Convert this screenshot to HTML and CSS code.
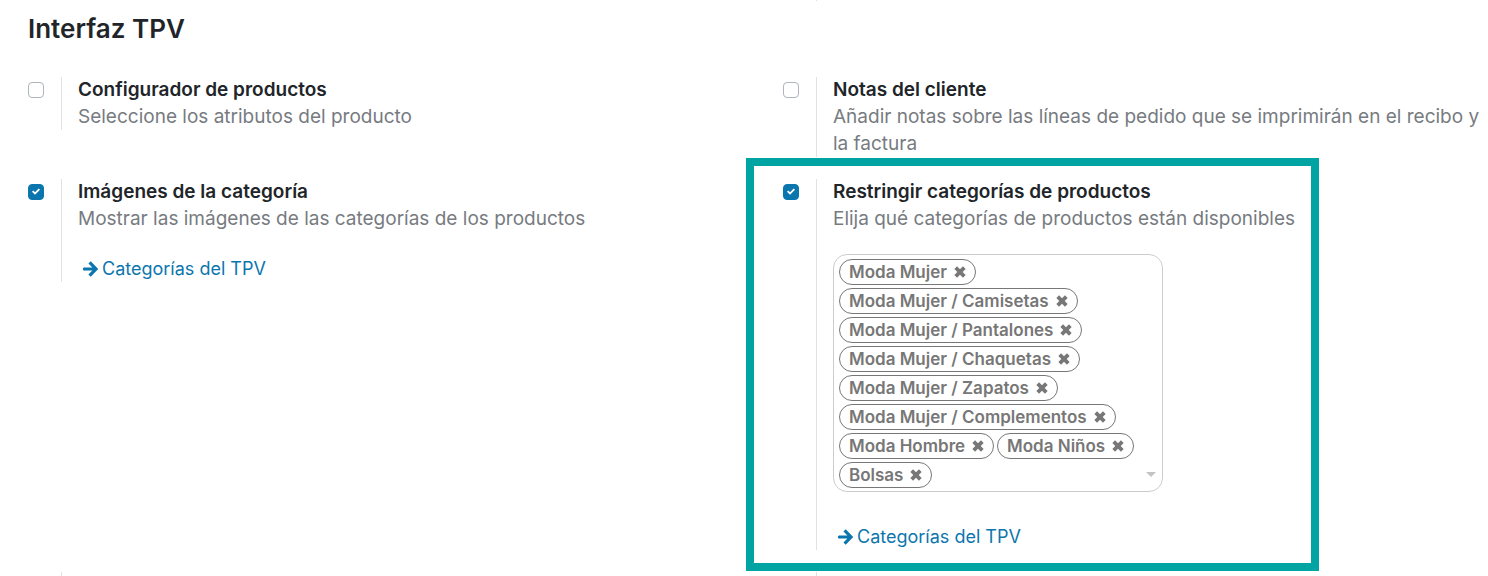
FILE: index.html
```
<!DOCTYPE html>
<html lang="es">
<head>
<meta charset="utf-8">
<title>Interfaz TPV</title>
<meta name="viewport" content="width=device-width, initial-scale=1">
<link rel="stylesheet" href="styles.css">
</head>
<body>
<svg class="sprite" aria-hidden="true">
  <symbol id="arrow" viewBox="0 0 16 16"><path d="M2 8H13M7.6 1.4L14 8L7.6 14.6" fill="none" stroke="currentColor" stroke-width="3.2"/><path d="M2.4 6.4a1.6 1.6 0 0 0 0 3.2" fill="currentColor"/></symbol>
  <symbol id="times" viewBox="0 0 12 12"><path d="M1.7 1.7L10.3 10.3M10.3 1.7L1.7 10.3" fill="none" stroke="currentColor" stroke-width="3.8"/></symbol>
</svg>
<main class="settings">
  <div class="grid grid-previous"><div></div><div class="stub"></div></div>
  <h2 class="section-title">Interfaz TPV</h2>
  <div class="grid">
    <section class="setting">
      <input class="check" type="checkbox" id="configurator">
      <div class="setting-body">
        <label class="name" for="configurator">Configurador de productos</label>
        <p class="help">Seleccione los atributos del producto</p>
      </div>
    </section>
    <section class="setting">
      <input class="check" type="checkbox" id="notes">
      <div class="setting-body">
        <label class="name" for="notes">Notas del cliente</label>
        <p class="help">Añadir notas sobre las líneas de pedido que se imprimirán en el recibo y la factura</p>
      </div>
    </section>
    <section class="setting">
      <input class="check" type="checkbox" id="images" checked>
      <div class="setting-body">
        <label class="name" for="images">Imágenes de la categoría</label>
        <p class="help">Mostrar las imágenes de las categorías de los productos</p>
        <a class="link" href="#"><svg class="arrow"><use href="#arrow"/></svg>Categorías del TPV</a>
      </div>
    </section>
    <section class="setting highlighted">
      <input class="check" type="checkbox" id="restrict" checked>
      <div class="setting-body">
        <label class="name" for="restrict">Restringir categorías de productos</label>
        <p class="help">Elija qué categorías de productos están disponibles</p>
        <div class="tags">
          <span class="tag">Moda Mujer<button class="remove" type="button" aria-label="Eliminar Moda Mujer"><svg><use href="#times"/></svg></button></span>
          <span class="tag">Moda Mujer / Camisetas<button class="remove" type="button" aria-label="Eliminar Camisetas"><svg><use href="#times"/></svg></button></span>
          <span class="tag">Moda Mujer / Pantalones<button class="remove" type="button" aria-label="Eliminar Pantalones"><svg><use href="#times"/></svg></button></span>
          <span class="tag">Moda Mujer / Chaquetas<button class="remove" type="button" aria-label="Eliminar Chaquetas"><svg><use href="#times"/></svg></button></span>
          <span class="tag">Moda Mujer / Zapatos<button class="remove" type="button" aria-label="Eliminar Zapatos"><svg><use href="#times"/></svg></button></span>
          <span class="tag">Moda Mujer / Complementos<button class="remove" type="button" aria-label="Eliminar Complementos"><svg><use href="#times"/></svg></button></span>
          <span class="tag">Moda Hombre<button class="remove" type="button" aria-label="Eliminar Moda Hombre"><svg><use href="#times"/></svg></button></span>
          <span class="tag">Moda Niños<button class="remove" type="button" aria-label="Eliminar Moda Niños"><svg><use href="#times"/></svg></button></span>
          <span class="tag">Bolsas<button class="remove" type="button" aria-label="Eliminar Bolsas"><svg><use href="#times"/></svg></button></span>
          <input class="tag-input" type="text" aria-label="Añadir categoría">
        </div>
        <a class="link" href="#"><svg class="arrow"><use href="#arrow"/></svg>Categorías del TPV</a>
      </div>
    </section>
    <div class="stub"></div>
    <div class="stub"></div>
  </div>
</main>
</body>
</html>
```
FILE: styles.css
```
*, *::before, *::after { box-sizing: border-box; }
body {
  margin: 0;
  background: #fff;
  color: #212529;
  font-family: Inter, "Noto Sans", sans-serif;
  font-size: 18px;
  line-height: 27px;
}
.sprite { display: none; }
.settings { padding: 0 6px 0 28px; }
.grid {
  display: grid;
  grid-template-columns: 1fr 1fr;
  gap: 22px 56px;
}
.grid-previous { height: 1px; }
.section-title {
  margin: 10px 0 30px;
  font-size: 26px;
  font-weight: 600;
  line-height: 36px;
}
.setting {
  position: relative;
  display: flex;
  align-items: flex-start;
  gap: 17px;
}
.setting-body {
  flex: 1;
  min-width: 0;
  padding-left: 16px;
  border-left: 1px solid #dee2e6;
}
.stub {
  height: 4px;
  margin-left: 33px;
  border-left: 1px solid #dee2e6;
}
.grid-previous .stub { height: 1px; }
.highlighted::after {
  content: "";
  position: absolute;
  top: -21px;
  bottom: -21px;
  left: -37px;
  width: 573px;
  border: 8px solid #00a5a3;
  pointer-events: none;
}
.check {
  appearance: none;
  width: 16px;
  height: 16px;
  margin: 5px 0 0;
  border: 1px solid #adb5bd;
  border-radius: 4px;
  background: #fff;
}
.check:checked {
  border-color: #0b76ad;
  background: #0b76ad;
}
.check:checked::before {
  content: "";
  display: block;
  width: 8px;
  height: 8px;
  margin: 3px;
  background: #fff;
  clip-path: polygon(0 48%, 16% 32%, 38% 52%, 84% 6%, 100% 22%, 38% 84%);
}
.name {
  display: block;
  font-size: 19px;
  font-weight: 600;
  line-height: 26px;
}
.help {
  margin: 0;
  color: #777b7f;
  font-size: 19px;
}
.link {
  display: flex;
  align-items: center;
  gap: 4px;
  width: fit-content;
  margin: 23px 0 0 4px;
  color: #0b76ad;
  text-decoration: none;
}
.arrow {
  width: 16px;
  height: 16px;
}
.tags {
  position: relative;
  display: flex;
  flex-wrap: wrap;
  gap: 3px;
  max-width: 330px;
  margin-top: 22px;
  padding: 4px 5px 3px;
  border: 1px solid #ccc;
  border-radius: 14px;
}
.tags::after {
  content: "";
  position: absolute;
  right: 6px;
  bottom: 14px;
  border: 5px solid transparent;
  border-top-color: #c4c4c4;
  border-bottom-width: 0;
}
.tags + .link { margin-top: 31px; }
.tag {
  display: flex;
  align-items: center;
  gap: 7px;
  height: 26px;
  padding: 0 9px;
  border: 1px solid #777;
  border-radius: 13px;
  color: #777;
  font-size: 17px;
  font-weight: 600;
  line-height: 24px;
}
.remove {
  display: flex;
  padding: 0;
  border: 0;
  background: none;
  color: inherit;
}
.remove svg {
  width: 12px;
  height: 12px;
}
.tag-input {
  flex: 1;
  min-width: 20px;
  width: 20px;
  height: 26px;
  padding: 0;
  border: 0;
  outline: 0;
  background: none;
  font: inherit;
}
```
